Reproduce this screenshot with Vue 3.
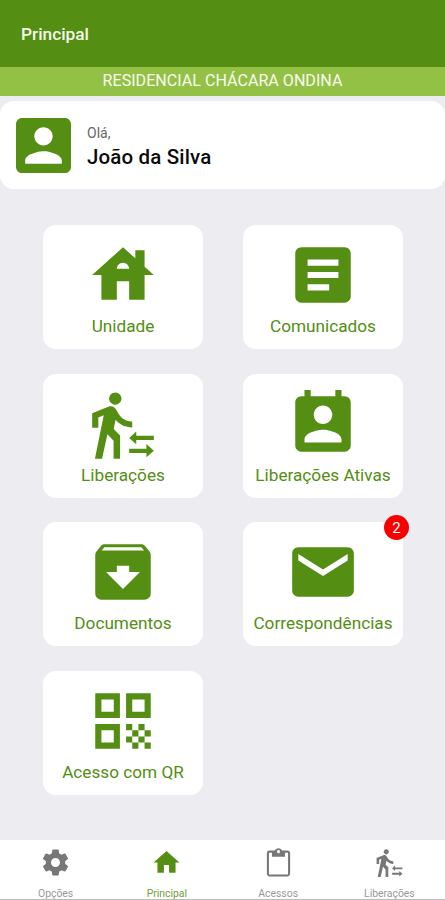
<script setup>
const walker =
  'M14 16.5l2.3-2.1v1.4H22v1.4h-5.7v1.4zM14 20v1.4h5.6v1.4L22 20.65 19.6 18.5V20zM9.5 5.75c1.1 0 2-.9 2-2s-.9-2-2-2-2 .9-2 2 .9 2 2 2zM5.75 9.15L2.9 23.3h2.3l1.75-8L8.95 17.4v5.9h2.1v-7.6L9 13.65l.6-3C10.9 12.25 12.8 13.1 15 13.1v-1.9c-1.85 0-3.45-1-4.35-2.4l-.95-1.6C9.35 6.6 8.7 6.25 8 6.25c-.25 0-.5.05-.75.15L2 8.55v4.7h2V9.9l1.75-.75z'

const cards = [
  { label: 'Unidade', icon: 'M19 9.3V4h-3v2.6L12 3 2 12h3v8h5v-6h4v6h5v-8h3l-3-2.7zM10 10c0-1.1.9-2 2-2s2 .9 2 2h-4z' },
  { label: 'Comunicados', icon: 'M19 3H5c-1.1 0-2 .9-2 2v14c0 1.1.9 2 2 2h14c1.1 0 2-.9 2-2V5c0-1.1-.9-2-2-2zM14 17H7v-2h7v2zm3-4H7v-2h10v2zm0-4H7V7h10v2z' },
  { label: 'Liberações', icon: walker },
  { label: 'Liberações Ativas', icon: 'M19 3h-1V1h-2v2H8V1H6v2H5c-1.11 0-2 .9-2 2v14c0 1.1.89 2 2 2h14c1.1 0 2-.9 2-2V5c0-1.1-.9-2-2-2zm-7 3c1.66 0 3 1.34 3 3s-1.34 3-3 3-3-1.34-3-3 1.34-3 3-3zm6 12H6v-1c0-2 4-3.1 6-3.1s6 1.1 6 3.1v1z' },
  { label: 'Documentos', icon: 'M20.54 5.23l-1.39-1.68C18.88 3.21 18.47 3 18 3H6c-.47 0-.88.21-1.16.55L3.46 5.23C3.17 5.57 3 6.02 3 6.5V19c0 1.1.9 2 2 2h14c1.1 0 2-.9 2-2V6.5c0-.48-.17-.93-.46-1.27zM12 17.5L6.5 12H10v-2h4v2h3.5L12 17.5zM5.12 5l.81-1h12l.94 1H5.12z' },
  { label: 'Correspondências', badge: 2, icon: 'M20 4H4c-1.1 0-1.99.9-1.99 2L2 18c0 1.1.9 2 2 2h16c1.1 0 2-.9 2-2V6c0-1.1-.9-2-2-2zm0 4.3l-8 5-8-5V6.2l8 5 8-5v2.1z' },
  { label: 'Acesso com QR', icon: 'M3 3h8v8H3zM5 5v4h4V5zM13 3h8v8h-8zM15 5v4h4V5zM3 13h8v8H3zM5 15v4h4v-4zM13 13h2v2h-2zM17 13h2v2h-2zM15 15h2v2h-2zM19 15h2v2h-2zM13 17h2v2h-2zM17 17h2v2h-2zM15 19h2v2h-2zM19 19h2v2h-2z' },
]

const tabs = [
  { label: 'Opções', icon: 'M19.43 12.98c.04-.32.07-.64.07-.98s-.03-.66-.07-.98l2.11-1.65c.19-.15.24-.42.12-.64l-2-3.46c-.12-.22-.39-.3-.61-.22l-2.49 1c-.52-.4-1.08-.73-1.69-.98l-.38-2.65C14.46 2.18 14.25 2 14 2h-4c-.25 0-.46.18-.49.42l-.38 2.65c-.61.25-1.17.59-1.69.98l-2.49-1c-.23-.09-.49 0-.61.22l-2 3.46c-.13.22-.07.49.12.64l2.11 1.65c-.04.32-.07.65-.07.98s.03.66.07.98l-2.11 1.65c-.19.15-.24.42-.12.64l2 3.46c.12.22.39.3.61.22l2.49-1c.52.4 1.08.73 1.69.98l.38 2.65c.03.24.24.42.49.42h4c.25 0 .46-.18.49-.42l.38-2.65c.61-.25 1.17-.59 1.69-.98l2.49 1c.23.09.49 0 .61-.22l2-3.46c.12-.22.07-.49-.12-.64l-2.11-1.65zM12 15.5c-1.93 0-3.5-1.57-3.5-3.5s1.57-3.5 3.5-3.5 3.5 1.57 3.5 3.5-1.57 3.5-3.5 3.5z' },
  { label: 'Principal', active: true, icon: 'M10 20v-6h4v6h5v-8h3L12 3 2 12h3v8z' },
  { label: 'Acessos', icon: 'M19 2.8h-4.1C14.4 1.6 13.3.9 12 .9s-2.4.7-2.9 1.9H5c-1.1 0-2 .9-2 2v16c0 1.1.9 2 2 2h14c1.1 0 2-.9 2-2v-16c0-1.1-.9-2-2-2zM12 2.4c.7 0 1.2.5 1.2 1.2s-.5 1.2-1.2 1.2-1.2-.5-1.2-1.2.5-1.2 1.2-1.2zM19.4 21.2H4.6V4.4H7v3.2h10V4.4h2.4z' },
  { label: 'Liberações', icon: walker },
]
</script>

<template>
  <div class="screen">
    <header class="app-bar"><h1>Principal</h1></header>
    <div class="residence">RESIDENCIAL CHÁCARA ONDINA</div>

    <section class="profile">
      <svg class="avatar" viewBox="3 3 18 18">
        <path d="M3 5v14c0 1.1.89 2 2 2h14c1.1 0 2-.9 2-2V5c0-1.1-.9-2-2-2H5c-1.11 0-2 .9-2 2zm12 4c0 1.66-1.34 3-3 3s-3-1.34-3-3 1.34-3 3-3 3 1.34 3 3zm-9 8c0-2 4-3.1 6-3.1s6 1.1 6 3.1v1H6v-1z" />
      </svg>
      <div class="greeting">
        <span class="hello">Olá,</span>
        <strong class="name">João da Silva</strong>
      </div>
    </section>

    <main class="grid">
      <div v-for="card in cards" :key="card.label" class="card">
        <svg class="card-icon" viewBox="0 0 24 24"><path fill-rule="evenodd" :d="card.icon" /></svg>
        <span class="card-label">{{ card.label }}</span>
        <span v-if="card.badge" class="badge">{{ card.badge }}</span>
      </div>
    </main>

    <nav class="tabs">
      <div v-for="tab in tabs" :key="tab.label" class="tab" :class="{ active: tab.active }">
        <svg class="tab-icon" viewBox="0 0 24 24"><path fill-rule="evenodd" :d="tab.icon" /></svg>
        <span class="tab-label">{{ tab.label }}</span>
      </div>
    </nav>
  </div>
</template>

<style>
body {
  margin: 0;
}
</style>

<style scoped>
.screen {
  display: flex;
  flex-direction: column;
  width: 445px;
  height: 900px;
  overflow: hidden;
  background: #ededf1;
  font-family: Roboto, sans-serif;
  color: #548e12;
}
.app-bar {
  display: flex;
  align-items: center;
  height: 67px;
  padding-left: 21px;
  background: #548e12;
}
h1 {
  margin: 0;
  font-size: 17.3px;
  font-weight: 500;
  line-height: 20px;
  color: #f3f8e9;
}
.residence {
  height: 29px;
  line-height: 28px;
  text-align: center;
  font-size: 16.1px;
  background: #93c145;
  color: #f8fbed;
}
.profile {
  display: flex;
  align-items: center;
  gap: 16px;
  height: 88px;
  margin-top: 5px;
  padding-left: 16px;
  border-radius: 14px;
  background: #fff;
}
.avatar {
  width: 55px;
  height: 55px;
  fill: #548e12;
}
.greeting {
  display: flex;
  flex-direction: column;
  padding-top: 3px;
}
.hello {
  font-size: 14px;
  line-height: 20px;
  color: #666;
}
.name {
  font-size: 20.5px;
  font-weight: 500;
  line-height: 28px;
  letter-spacing: 0.15px;
  color: #0b0b0b;
}
.grid {
  display: grid;
  grid-template-columns: 160px 160px;
  grid-auto-rows: 124px;
  gap: 24.5px 40px;
  flex: 1;
  align-content: start;
  padding: 36px 0 0 43px;
}
.card {
  position: relative;
  display: flex;
  flex-direction: column;
  align-items: center;
  padding-top: 13px;
  box-sizing: border-box;
  border-radius: 13px;
  background: #fff;
}
.card-icon {
  width: 74px;
  height: 74px;
  flex: none;
  fill: #548e12;
}
.card-label {
  margin-top: 3px;
  font-size: 17.2px;
  line-height: 22px;
  white-space: nowrap;
}
.badge {
  position: absolute;
  top: -7px;
  right: -6px;
  width: 25px;
  height: 25px;
  border-radius: 50%;
  background: #f90000;
  color: #fff;
  font-size: 15px;
  line-height: 27px;
  text-align: center;
}
.tabs {
  display: flex;
  height: 60px;
  flex: none;
  box-sizing: border-box;
  border-bottom: 1px solid #bcbcbc;
  background: #fff;
  color: #777;
}
.tab {
  display: flex;
  flex: 1;
  flex-direction: column;
  align-items: center;
  padding-top: 7px;
}
.active {
  color: #548e12;
}
.tab-icon {
  width: 31px;
  height: 31px;
  flex: none;
  fill: currentColor;
}
.tab-label {
  margin-top: 10px;
  font-size: 10.4px;
  line-height: 12px;
  color: #999;
}
.active .tab-label {
  color: #6fa038;
}
</style>
